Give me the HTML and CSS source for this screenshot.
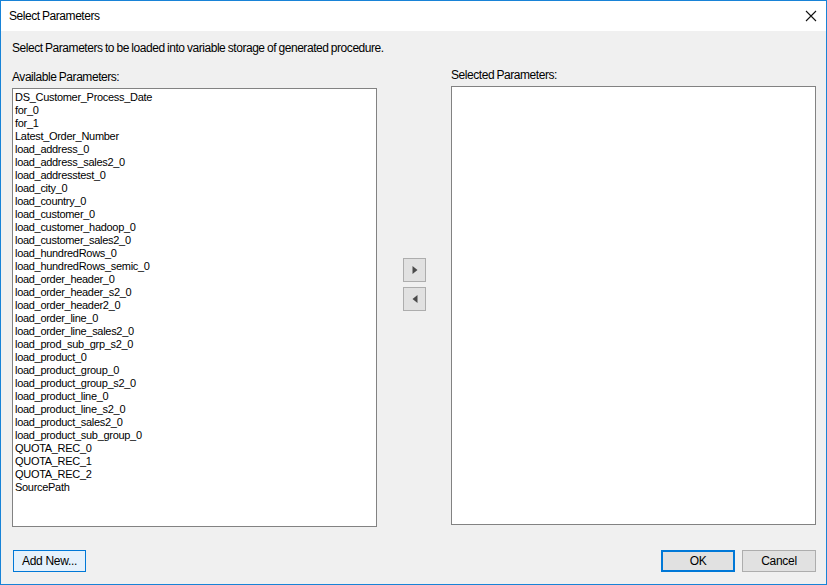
FILE: index.html
```html
<!DOCTYPE html>
<html>
<head>
<meta charset="utf-8">
<link rel="stylesheet" href="styles.css">
</head>
<body>
<div class="window">
  <div class="titlebar">
    <span class="title">Select Parameters</span>
    <svg class="close" width="12" height="12" viewBox="0 0 12 12"><path d="M1 1 L11 11 M11 1 L1 11" stroke="#111" stroke-width="1.1" fill="none"/></svg>
  </div>
  <div class="content">
    <p class="desc">Select Parameters to be loaded into variable storage of generated procedure.</p>
    <div class="lists">
      <div class="col col-left">
        <div class="label">Available Parameters:</div>
        <ul class="listbox">
          <li>DS_Customer_Process_Date</li>
          <li>for_0</li>
          <li>for_1</li>
          <li>Latest_Order_Number</li>
          <li>load_address_0</li>
          <li>load_address_sales2_0</li>
          <li>load_addresstest_0</li>
          <li>load_city_0</li>
          <li>load_country_0</li>
          <li>load_customer_0</li>
          <li>load_customer_hadoop_0</li>
          <li>load_customer_sales2_0</li>
          <li>load_hundredRows_0</li>
          <li>load_hundredRows_semic_0</li>
          <li>load_order_header_0</li>
          <li>load_order_header_s2_0</li>
          <li>load_order_header2_0</li>
          <li>load_order_line_0</li>
          <li>load_order_line_sales2_0</li>
          <li>load_prod_sub_grp_s2_0</li>
          <li>load_product_0</li>
          <li>load_product_group_0</li>
          <li>load_product_group_s2_0</li>
          <li>load_product_line_0</li>
          <li>load_product_line_s2_0</li>
          <li>load_product_sales2_0</li>
          <li>load_product_sub_group_0</li>
          <li>QUOTA_REC_0</li>
          <li>QUOTA_REC_1</li>
          <li>QUOTA_REC_2</li>
          <li>SourcePath</li>
        </ul>
      </div>
      <div class="col col-mid">
        <button class="arrow" type="button"><svg width="6" height="8" viewBox="0 0 6 8"><path d="M0.5 0 L5.5 4 L0.5 8 Z" fill="#4a4a4a"/></svg></button>
        <button class="arrow" type="button"><svg width="6" height="8" viewBox="0 0 6 8"><path d="M5.5 0 L0.5 4 L5.5 8 Z" fill="#4a4a4a"/></svg></button>
      </div>
      <div class="col col-right">
        <div class="label">Selected Parameters:</div>
        <ul class="listbox"></ul>
      </div>
    </div>
    <div class="footer">
      <button class="btn btn-focus" type="button">Add New...</button>
      <div class="footer-right">
        <button class="btn btn-default" type="button">OK</button>
        <button class="btn" type="button">Cancel</button>
      </div>
    </div>
  </div>
</div>
</body>
</html>
```

FILE: styles.css
```css
html, body {
  margin: 0;
  padding: 0;
  background: #f0f0f0;
}
.window {
  width: 827px;
  height: 585px;
  box-sizing: border-box;
  border: 1px solid #1883d7;
  display: flex;
  flex-direction: column;
  font-family: "Liberation Sans", Arial, sans-serif;
  font-size: 12px;
  letter-spacing: -0.45px;
  word-spacing: -0.5px;
  color: #000;
  background: #f0f0f0;
}
.titlebar {
  height: 30px;
  background: #fff;
  display: flex;
  align-items: center;
  justify-content: space-between;
  padding: 0 9px 0 8px;
  flex: none;
}
.title {
  font-size: 12px;
  color: #000;
}
.close {
  display: block;
}
.content {
  flex: 1;
  display: flex;
  flex-direction: column;
  padding: 10px 10px 12px 11px;
}
.desc {
  margin: 0;
  line-height: 15px;
  height: 15px;
}
.lists {
  margin-top: 12px;
  display: grid;
  grid-template-columns: 365px 74px 365px;
  align-items: start;
}
.col-left {
  padding-top: 2px;
}
.label {
  line-height: 15px;
  height: 15px;
  margin-bottom: 3px;
}
.listbox {
  list-style: none;
  margin: 0;
  padding: 2px 2px 0;
  height: 439px;
  box-sizing: border-box;
  background: #fff;
  border: 1px solid #828282;
  font-size: 11px;
  letter-spacing: -0.3px;
  word-spacing: 0;
  line-height: 13px;
  overflow: hidden;
}
.listbox li {
  height: 13px;
  white-space: nowrap;
}
.col-mid {
  display: flex;
  flex-direction: column;
  gap: 5px;
  padding-top: 190px;
  padding-left: 26px;
}
.arrow {
  width: 23px;
  height: 24px;
  box-sizing: border-box;
  background: #e1e1e1;
  border: 1px solid #adadad;
  padding: 0;
  margin: 0;
  display: flex;
  align-items: center;
  justify-content: center;
}
.arrow svg {
  display: block;
}
.footer {
  margin-top: 23px;
  display: flex;
  justify-content: space-between;
  align-items: center;
  padding-left: 1px;
}
.footer-right {
  display: flex;
  gap: 7px;
}
.btn {
  width: 74px;
  height: 22px;
  box-sizing: border-box;
  background: #e1e1e1;
  border: 1px solid #adadad;
  font-family: "Liberation Sans", Arial, sans-serif;
  font-size: 12px;
  letter-spacing: -0.3px;
  color: #000;
  padding: 0;
  margin: 0;
}
.btn-focus {
  width: 73px;
  background: #e5f1fb;
  border: 1px solid #0078d7;
}
.btn-default {
  border: 2px solid #0078d7;
}
```
